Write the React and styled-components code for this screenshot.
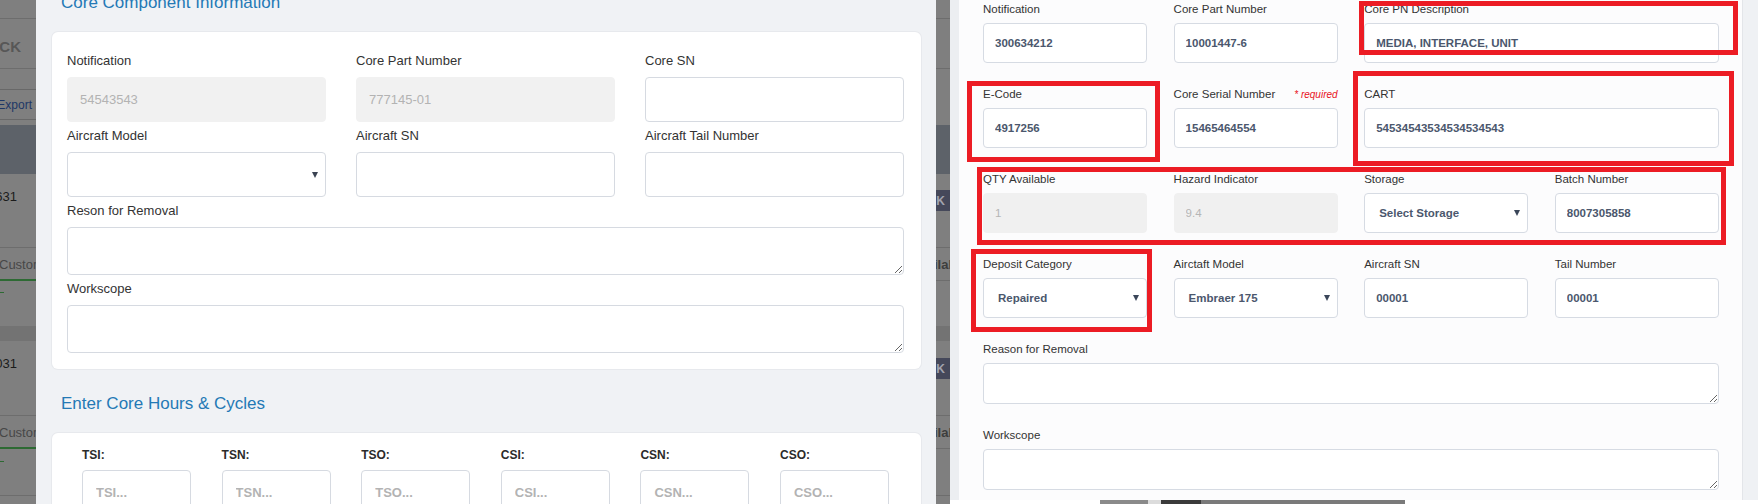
import styled, { createGlobalStyle } from "styled-components";

const GlobalStyle = createGlobalStyle`
  html, body { margin: 0; padding: 0; }
  body {
    font-family: "Liberation Sans", Arial, sans-serif;
    background: #fff;
  }
  * { box-sizing: border-box; }
`;

const Screen = styled.div`
  display: flex;
  width: 1758px;
  height: 504px;
  overflow: hidden;
`;

/* ---------- left screenshot ---------- */

const LeftShot = styled.div`
  display: flex;
  width: 950px;
  height: 504px;
  flex-shrink: 0;
`;

const Backdrop = styled.div`
  width: ${p => p.$width}px;
  flex-shrink: 0;
  display: flex;
  flex-direction: column;
  background: #7f7f7f;
  overflow: hidden;
`;

const BackRow = styled.div`
  height: ${p => p.$h}px;
  flex-shrink: 0;
  display: flex;
  align-items: flex-start;
  justify-content: ${p => p.$justify || "flex-start"};
  padding: ${p => p.$pt || 0}px ${p => p.$pr || 0}px 0 0;
  background: ${p => p.$bg || "transparent"};
  border-bottom: ${p => (p.$line ? `${p.$lineW || 1}px solid ${p.$line}` : "none")};
  white-space: nowrap;
`;

const BackText = styled.span`
  font-size: ${p => p.$size || 13}px;
  line-height: 16px;
  font-weight: ${p => (p.$bold ? 700 : 400)};
  color: ${p => p.$color || "#4a4a4a"};
  margin-left: ${p => p.$ml || 0}px;
`;

const ExportBtn = styled.span`
  display: flex;
  align-items: center;
  justify-content: flex-end;
  width: 100%;
  height: 31px;
  padding-right: 4px;
  border-top: 1px solid #686868;
  border-bottom: 1px solid #686868;
  font-size: 12px;
  color: #1d3766;
`;

const Badge = styled.span`
  display: flex;
  align-items: center;
  justify-content: flex-end;
  width: 100%;
  height: 21px;
  padding-right: 5px;
  background: #45485a;
  color: #a2a3ae;
  font-size: 12px;
  font-weight: 700;
`;

const Dash = styled.span`
  width: 4px;
  height: 1px;
  background: #2d6a33;
`;

const LEFT_ROWS = [
  { h: 19, line: "#6d6d6d" },
  { h: 50, pt: 20, justify: "flex-end", pr: 15, line: "#6d6d6d",
    content: <BackText $size={15} $bold $color="#575757">STOCK</BackText> },
  { h: 56, pt: 20, content: <ExportBtn>Export</ExportBtn> },
  { h: 49, bg: "#5d6269" },
  { h: 74, pt: 15, justify: "flex-end", pr: 19, line: "#6d6d6d",
    content: <BackText $color="#1b1b1b">124631</BackText> },
  { h: 33, pt: 9, line: "#2d6a33", lineW: 2,
    content: <BackText $color="#474747" $ml={-1}>Customer</BackText> },
  { h: 45, pt: 11, content: <Dash /> },
  { h: 15, bg: "#737373" },
  { h: 75, pt: 15, justify: "flex-end", pr: 19, line: "#6d6d6d",
    content: <BackText $color="#1b1b1b">124031</BackText> },
  { h: 33, pt: 9, line: "#2d6a33", lineW: 2,
    content: <BackText $color="#474747" $ml={-1}>Customer</BackText> },
  { h: 47, pt: 12, line: "#6d6d6d", content: <Dash /> },
  { h: 8 },
];

const RIGHT_ROWS = [
  { h: 19, line: "#6d6d6d" },
  { h: 50, line: "#6d6d6d" },
  { h: 56 },
  { h: 49, bg: "#5d6269" },
  { h: 74, pt: 16, line: "#6d6d6d", content: <Badge>K</Badge> },
  { h: 33, pt: 9, line: "#6d6d6d",
    content: <BackText $bold $color="#3d3d3d" $ml={-2}>ilable</BackText> },
  { h: 45 },
  { h: 15, bg: "#737373" },
  { h: 75, pt: 17, line: "#6d6d6d", content: <Badge>K</Badge> },
  { h: 33, pt: 9, line: "#6d6d6d",
    content: <BackText $bold $color="#3d3d3d" $ml={-2}>ilable</BackText> },
  { h: 47, line: "#6d6d6d" },
  { h: 8 },
];

const renderRows = rows =>
  rows.map((r, i) => (
    <BackRow key={i} $h={r.h} $pt={r.pt} $pr={r.pr} $justify={r.justify}
      $bg={r.bg} $line={r.line} $lineW={r.lineW}>
      {r.content}
    </BackRow>
  ));

const Modal = styled.div`
  width: 900px;
  flex-shrink: 0;
  background: #f0f2f5;
  padding: 0 15px 0 16px;
  overflow: hidden;
`;

const SectionTitle = styled.h2`
  margin: ${p => (p.$first ? "-8px" : "24px")} 0 18px 9px;
  font-size: 17px;
  line-height: 22px;
  font-weight: 400;
  color: #2479b5;
`;

const Card = styled.div`
  background: #fff;
  border-radius: 6px;
  box-shadow: 0 0 0 1px #e7e9ed;
  padding: ${p => p.$pad};
`;

const InfoGrid = styled.div`
  display: grid;
  grid-template-columns: repeat(3, 259px);
  column-gap: 30px;
  row-gap: 6px;
`;

const LField = styled.div`
  grid-column: span ${p => p.$span || 1};
  display: flex;
  flex-direction: column;
`;

const LLabel = styled.label`
  font-size: 13px;
  line-height: 16px;
  color: #333;
  margin-bottom: 8px;
`;

const LInput = styled.input`
  width: 100%;
  height: 45px;
  padding: 0 12px;
  border: 1px solid ${p => (p.disabled ? "#f1f1f1" : "#d6dae1")};
  border-radius: 4px;
  background: ${p => (p.disabled ? "#f1f1f1" : "#fff")};
  font-family: inherit;
  font-size: 13px;
  color: #b3b3b3;
  -webkit-text-fill-color: #b3b3b3;
  outline: none;
`;

const LSelect = styled.div`
  position: relative;
  height: 45px;
  border: 1px solid #d6dae1;
  border-radius: 4px;
  background: #fff;

  &::after {
    content: "";
    position: absolute;
    right: 7px;
    top: 19px;
    border-left: 3px solid transparent;
    border-right: 3px solid transparent;
    border-top: 6px solid #3b4352;
  }
`;

const LTextarea = styled.textarea`
  width: 100%;
  height: 48px;
  border: 1px solid #d6dae1;
  border-radius: 4px;
  background: #fff;
  font-family: inherit;
  outline: none;
  display: block;
`;

const HoursGrid = styled.div`
  display: grid;
  grid-template-columns: repeat(6, 109px);
  column-gap: 30.6px;
`;

const HoursField = styled.div`
  display: flex;
  flex-direction: column;
`;

const HoursLabel = styled.label`
  font-size: 12px;
  line-height: 15px;
  font-weight: 700;
  color: #2b2b2b;
  margin-bottom: 7px;
`;

const HoursInput = styled.input`
  width: 100%;
  height: 45px;
  padding: 0 13px;
  border: 1px solid #d6dae1;
  border-radius: 4px;
  font-family: inherit;
  font-size: 13px;
  outline: none;

  &::placeholder {
    color: #b3b3b3;
    font-weight: 700;
  }
`;

/* ---------- right screenshot ---------- */

const RightShot = styled.div`
  flex: 1;
  display: flex;
  flex-direction: column;
  background: #fff;
`;

const RightBody = styled.div`
  flex: 1;
  display: flex;
  position: relative;
  overflow: hidden;
`;

const FormPanel = styled.div`
  flex: 1;
  background: #fcfcfd;
  border-left: 9px solid #eceef1;
  padding: 2px 0 0 24px;
`;

const FormGrid = styled.div`
  display: grid;
  grid-template-columns: repeat(4, 164px);
  column-gap: 26.6px;
  row-gap: 24px;
`;

const RFieldBox = styled.div`
  grid-column: span ${p => p.$span || 1};
  display: flex;
  flex-direction: column;
`;

const RLabelRow = styled.div`
  display: flex;
  justify-content: space-between;
  align-items: center;
  height: 14px;
  margin-bottom: 7px;
`;

const RLabel = styled.label`
  font-size: 11.5px;
  color: #333;
`;

const Required = styled.span`
  font-size: 10px;
  font-style: italic;
  color: #e8101b;
`;

const RInput = styled.input`
  width: 100%;
  height: 40px;
  padding: 0 11px;
  border: 1px solid ${p => (p.disabled ? "#f0f0f0" : "#d6dbe3")};
  border-radius: 4px;
  background: ${p => (p.disabled ? "#f0f0f0" : "#fff")};
  font-family: inherit;
  font-size: 11.5px;
  font-weight: ${p => (p.disabled ? 400 : 700)};
  color: ${p => (p.disabled ? "#b5b5b5" : "#4b576d")};
  -webkit-text-fill-color: ${p => (p.disabled ? "#b5b5b5" : "#4b576d")};
  outline: none;
`;

const RSelect = styled.div`
  position: relative;
  display: flex;
  align-items: center;
  height: 40px;
  padding: 0 14px;
  border: 1px solid #d6dbe3;
  border-radius: 4px;
  background: #fff;
  font-size: 11.5px;
  font-weight: 700;
  color: #4b576d;

  &::after {
    content: "";
    position: absolute;
    right: 7px;
    top: 16px;
    border-left: 3px solid transparent;
    border-right: 3px solid transparent;
    border-top: 6px solid #3b4659;
  }
`;

const RTextarea = styled.textarea`
  width: 100%;
  height: 41px;
  border: 1px solid #d6dbe3;
  border-radius: 4px;
  background: #fff;
  font-family: inherit;
  outline: none;
  display: block;
`;

const RightEdge = styled.div`
  width: 16px;
  flex-shrink: 0;
  background: #eff1f4;
  border-left: 1px solid #e3e5e9;
`;

const Mark = styled.div`
  position: absolute;
  left: ${p => p.$x}px;
  top: ${p => p.$y}px;
  width: ${p => p.$w}px;
  height: ${p => p.$h}px;
  border: 5px solid #ec1c24;
  pointer-events: none;
`;

const BottomStrip = styled.div`
  height: 4px;
  flex-shrink: 0;
  background: linear-gradient(
    to right,
    #fff 0 150px,
    #8a8a8a 150px 198px,
    #dcdcdc 198px 211px,
    #3a3a3a 211px 251px,
    #7a7a7a 251px 455px,
    #fff 455px
  );
`;

const MARKS = [
  [409, 1, 379, 54],
  [17, 81, 193, 81],
  [403, 71, 381, 95],
  [27, 167, 749, 78],
  [21, 249, 181, 83],
];

const HOURS = ["TSI", "TSN", "TSO", "CSI", "CSN", "CSO"];

const Field = ({ label, span, children }) => (
  <LField $span={span}>
    <LLabel>{label}</LLabel>
    {children}
  </LField>
);

const RField = ({ label, span, required, children }) => (
  <RFieldBox $span={span}>
    <RLabelRow>
      <RLabel>{label}</RLabel>
      {required && <Required>* required</Required>}
    </RLabelRow>
    {children}
  </RFieldBox>
);

export default function App() {
  return (
    <>
      <GlobalStyle />
      <Screen>
        <LeftShot>
          <Backdrop $width={36}>{renderRows(LEFT_ROWS)}</Backdrop>
          <Modal>
            <SectionTitle $first>Core Component Information</SectionTitle>
            <Card $pad="21px 16px 16px 15px">
              <InfoGrid>
                <Field label="Notification"><LInput disabled readOnly value="54543543" /></Field>
                <Field label="Core Part Number"><LInput disabled readOnly value="777145-01" /></Field>
                <Field label="Core SN"><LInput readOnly value="" /></Field>
                <Field label="Aircraft Model"><LSelect /></Field>
                <Field label="Aircraft SN"><LInput readOnly value="" /></Field>
                <Field label="Aircraft Tail Number"><LInput readOnly value="" /></Field>
                <Field label="Reson for Removal" span={3}><LTextarea readOnly /></Field>
                <Field label="Workscope" span={3}><LTextarea readOnly /></Field>
              </InfoGrid>
            </Card>
            <SectionTitle>Enter Core Hours &amp; Cycles</SectionTitle>
            <Card $pad="15px 30px 0">
              <HoursGrid>
                {HOURS.map(h => (
                  <HoursField key={h}>
                    <HoursLabel>{h}:</HoursLabel>
                    <HoursInput placeholder={`${h}...`} />
                  </HoursField>
                ))}
              </HoursGrid>
            </Card>
          </Modal>
          <Backdrop $width={14}>{renderRows(RIGHT_ROWS)}</Backdrop>
        </LeftShot>

        <RightShot>
          <RightBody>
            <FormPanel>
              <FormGrid>
                <RField label="Notification"><RInput readOnly value="300634212" /></RField>
                <RField label="Core Part Number"><RInput readOnly value="10001447-6" /></RField>
                <RField label="Core PN Description" span={2}><RInput readOnly value="MEDIA, INTERFACE, UNIT" /></RField>
                <RField label="E-Code"><RInput readOnly value="4917256" /></RField>
                <RField label="Core Serial Number" required><RInput readOnly value="15465464554" /></RField>
                <RField label="CART" span={2}><RInput readOnly value="54534543534534534543" /></RField>
                <RField label="QTY Available"><RInput disabled readOnly value="1" /></RField>
                <RField label="Hazard Indicator"><RInput disabled readOnly value="9.4" /></RField>
                <RField label="Storage"><RSelect>Select Storage</RSelect></RField>
                <RField label="Batch Number"><RInput readOnly value="8007305858" /></RField>
                <RField label="Deposit Category"><RSelect>Repaired</RSelect></RField>
                <RField label="Airctaft Model"><RSelect>Embraer 175</RSelect></RField>
                <RField label="Aircraft SN"><RInput readOnly value="00001" /></RField>
                <RField label="Tail Number"><RInput readOnly value="00001" /></RField>
                <RField label="Reason for Removal" span={4}><RTextarea readOnly /></RField>
                <RField label="Workscope" span={4}><RTextarea readOnly /></RField>
              </FormGrid>
            </FormPanel>
            <RightEdge />
            {MARKS.map(([x, y, w, h], i) => (
              <Mark key={i} $x={x} $y={y} $w={w} $h={h} />
            ))}
          </RightBody>
          <BottomStrip />
        </RightShot>
      </Screen>
    </>
  );
}
